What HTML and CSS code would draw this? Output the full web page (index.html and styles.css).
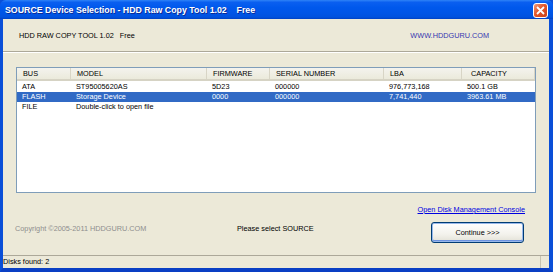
FILE: index.html
```html
<!DOCTYPE html>
<html lang="en">
<head>
    <meta charset="UTF-8">
    <title>SOURCE Device Selection - HDD Raw Copy Tool 1.02</title>
    <link rel="stylesheet" href="styles.css">
</head>
<body>

<div class="window">
    <div class="titlebar">
        <span class="title">SOURCE Device Selection - HDD Raw Copy Tool 1.02    Free</span>
        <span class="close">
            <svg width="9" height="9" viewBox="0 0 9 9"><path d="M1 1 L8 8 M8 1 L1 8" stroke="#fff" stroke-width="1.8"/></svg>
        </span>
    </div>
    <div class="frame">
        <div class="header">
            <span class="product">HDD RAW COPY TOOL 1.02   Free</span>
            <span class="site">WWW.HDDGURU.COM</span>
        </div>
        <div class="separator"></div>
        <div class="main">
            <div class="list">
                <div class="row head">
                    <span>BUS</span>
                    <span>MODEL</span>
                    <span>FIRMWARE</span>
                    <span>SERIAL NUMBER</span>
                    <span>LBA</span>
                    <span class="cap">CAPACITY</span>
                </div>
                <div class="row">
                    <span>ATA</span>
                    <span>ST95005620AS</span>
                    <span>5D23</span>
                    <span>000000</span>
                    <span>976,773,168</span>
                    <span>500.1 GB</span>
                </div>
                <div class="row selected">
                    <span>FLASH</span>
                    <span>Storage Device</span>
                    <span>0000</span>
                    <span>000000</span>
                    <span>7,741,440</span>
                    <span>3963.61 MB</span>
                </div>
                <div class="row">
                    <span>FILE</span>
                    <span>Double-click to open file</span>
                    <span></span>
                    <span></span>
                    <span></span>
                    <span></span>
                </div>
            </div>
            <div class="footer">
                <a class="console" href="#">Open Disk Management Console</a>
                <span class="copyright">Copyright ©2005-2011 HDDGURU.COM</span>
                <span class="prompt">Please select SOURCE</span>
                <button class="continue">Continue &gt;&gt;&gt;</button>
            </div>
        </div>
        <div class="statusbar">
            <span class="panel">Disks found: 2</span>
        </div>
    </div>
</div>

</body>
</html>
```

FILE: styles.css
```css
html, body {
    margin: 0;
    padding: 0;
}
body {
    width: 553px;
    height: 272px;
    overflow: hidden;
    font-family: "Liberation Sans", Arial, sans-serif;
    font-size: 7.3px;
    color: #000000;
    background-color: #0a4fd8;
}
.window {
    width: 553px;
    height: 272px;
    display: flex;
    flex-direction: column;
}
.titlebar {
    height: 19px;
    display: flex;
    align-items: center;
    padding: 0 4px 0 5px;
    background: linear-gradient(#2f83f7 0%, #0a5ff0 12%, #0058ec 40%, #0055e6 70%, #0052de 90%, #0041c4 100%);
    border-radius: 6px 6px 0 0;
}
.title {
    flex: 1;
    white-space: pre;
    color: #ffffff;
    font-weight: bold;
    font-size: 8.8px;
    text-shadow: 1px 1px 0 #0d2c96;
}
.close {
    width: 13px;
    height: 13px;
    display: flex;
    align-items: center;
    justify-content: center;
    border: 1px solid #ffffff;
    border-radius: 3px;
    background: linear-gradient(135deg, #f09b7c 0%, #e4572a 45%, #c9401a 100%);
    margin: 1px 1px 0 0;
}
.frame {
    flex: 1;
    display: flex;
    flex-direction: column;
    background-color: #ece9d8;
    border-left: 3px solid #0a4fd8;
    border-right: 4px solid #0a4fd8;
    border-bottom: 4px solid #0a3fc4;
}
.header {
    height: 32px;
    display: flex;
    align-items: center;
    padding: 0 60px 0 16px;
    white-space: pre;
}
.site {
    margin-left: auto;
    color: #3636b0;
}
.separator {
    height: 0;
    border-top: 1px solid #aca899;
    border-bottom: 1px solid #ffffff;
}
.main {
    flex: 1;
    padding: 14px 13px 0 13px;
    display: flex;
    flex-direction: column;
}
.list {
    height: 124px;
    border: 1px solid #7f9db9;
    background-color: #ffffff;
}
.row {
    display: grid;
    grid-template-columns: 54px 136px 63px 114px 78px 1fr;
    height: 10px;
    line-height: 10px;
    white-space: nowrap;
}
.row span {
    padding-left: 5px;
    overflow: hidden;
}
.row.head {
    height: 13px;
    line-height: 12px;
    margin-bottom: 1px;
    background: linear-gradient(#f4f3ee, #ebeadb);
    border-bottom: 2px solid #d6d3c4;
    box-sizing: border-box;
}
.row.head span {
    padding-left: 6px;
    border-right: 1px solid #d8d5c6;
}
.row.head span.cap {
    padding-left: 9px;
}
.row.selected {
    background-color: #316ac5;
    color: #ffffff;
}
.footer {
    display: grid;
    grid-template-columns: 221px 1fr auto;
    grid-template-rows: 11px 20px;
    row-gap: 7px;
    padding: 11px 12px 0 0;
}
.console {
    grid-column: 3;
    justify-self: end;
    color: #0000e0;
    text-decoration: underline;
    line-height: 11px;
    margin-right: -1px;
}
.copyright {
    grid-row: 2;
    color: #8e8e8e;
    line-height: 14px;
    margin-left: -1px;
}
.prompt {
    grid-row: 2;
    line-height: 14px;
}
.continue {
    grid-row: 2;
    grid-column: 3;
    justify-self: end;
    width: 93px;
    height: 21px;
    font-family: inherit;
    font-size: 7.3px;
    color: #000000;
    border: 1px solid #003c74;
    border-radius: 3px;
    background: linear-gradient(#ffffff, #f3f2ec 60%, #e2e0d6);
    box-shadow: inset 0 0 0 1px #98b8ea, inset 0 -1px 0 1px #6d93e0;
    padding: 0;
}
.statusbar {
    height: 13px;
    border-top: 1px solid #aca899;
    box-sizing: border-box;
    display: flex;
    align-items: center;
    padding: 0 8px 0 0;
}
.panel {
    flex: 1;
    height: 12px;
    line-height: 12px;
    border-right: 1px solid #c7c3b0;
}
```
